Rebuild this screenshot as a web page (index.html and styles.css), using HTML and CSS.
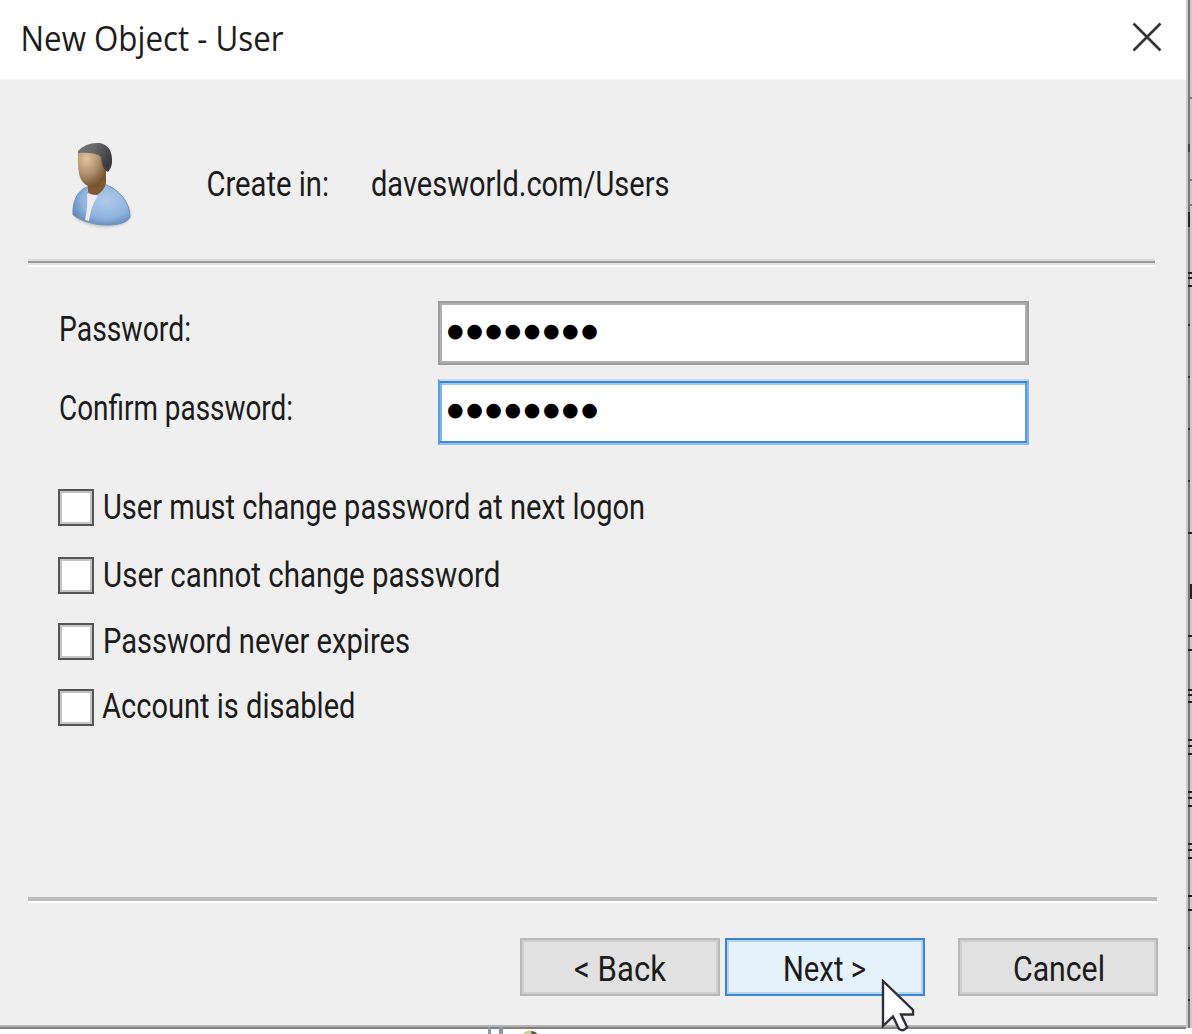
FILE: index.html
```html
<!DOCTYPE html>
<html lang="en">
<head>
<meta charset="utf-8">
<title>New Object - User</title>
<link rel="stylesheet" href="styles.css">
</head>
<body>
<div class="screen">
  <main class="dialog">
    <header class="titlebar">
      <svg class="text title" width="264" height="40"><text x="-1.5" y="31" textLength="263" lengthAdjust="spacingAndGlyphs">New Object - User</text></svg>
      <svg class="close" width="30" height="30" viewBox="0 0 30 30"><path d="M1.5 1.5 28.5 28.5M28.5 1.5 1.5 28.5"/></svg>
    </header>
    <section class="location">
      <svg class="avatar" width="70" height="92" viewBox="0 0 70 92">
        <defs>
          <radialGradient id="skin" cx=".3" cy=".25" r=".75"><stop offset="0" stop-color="#e2c3a0"/><stop offset=".55" stop-color="#b08f6c"/><stop offset="1" stop-color="#765331"/></radialGradient>
          <linearGradient id="hair" x1="0" x2="1" y1="0" y2=".4"><stop offset="0" stop-color="#777"/><stop offset=".5" stop-color="#666"/><stop offset="1" stop-color="#3c3c3c"/></linearGradient>
          <radialGradient id="shirt" cx=".58" cy=".4" r=".65"><stop offset="0" stop-color="#b0cbea"/><stop offset=".65" stop-color="#8fb4df"/><stop offset="1" stop-color="#6389b8"/></radialGradient>
          <filter id="soft" x="-20%" y="-20%" width="140%" height="140%"><feGaussianBlur stdDeviation="1.5"/></filter>
        </defs>
        <path d="M8 78Q28 92 54 86Q70 80 61 66Z" fill="#999" opacity=".6" filter="url(#soft)"/>
        <path d="M7 76C6 62 12 51 21 48L38 45C53 50 64 63 64 78C60 89 24 89 7 76Z" fill="url(#shirt)" stroke="#7195bd" stroke-width="1"/>
        <path d="M21 55Q26 53 32 57Q25 66 23 82L19 81Q22 67 21 55Z" fill="#eee9f5"/>
        <path d="M22 45 40 28 40 44Q38 52 31 56Q24 56 22 53Z" fill="#80592f"/>
        <path d="M12 13 36 10 41 29Q39 42 31 48Q22 50 16 42Q11 35 12 13Z" fill="url(#skin)"/>
        <path d="M12 12Q20 3 34 4Q47 7 46 24Q45 30 42 33Q36 31 35 18Q30 13 12 14Z" fill="url(#hair)"/>
      </svg>
      <svg class="text create" width="122" height="40"><text x="-1.5" y="31" textLength="122.5" lengthAdjust="spacingAndGlyphs">Create in:</text></svg>
      <svg class="text" width="300" height="40"><text x="-1" y="31" textLength="298.5" lengthAdjust="spacingAndGlyphs">davesworld.com/Users</text></svg>
    </section>
    <div class="rule rule-top"></div>
    <section class="fields">
      <div class="field">
        <svg class="text" width="378" height="40"><text x="-1" y="31" textLength="132" lengthAdjust="spacingAndGlyphs">Password:</text></svg>
        <div class="input"><span class="dots">●●●●●●●●</span></div>
      </div>
      <div class="field confirm">
        <svg class="text" width="378" height="40"><text x="-1" y="31" textLength="234" lengthAdjust="spacingAndGlyphs">Confirm password:</text></svg>
        <div class="input focused"><span class="dots">●●●●●●●●</span></div>
      </div>
    </section>
    <section class="options">
      <div class="option"><span class="box"></span><svg class="text" width="550" height="40"><text x="-2" y="31" textLength="542" lengthAdjust="spacingAndGlyphs">User must change password at next logon</text></svg></div>
      <div class="option"><span class="box"></span><svg class="text" width="550" height="40"><text x="-2" y="31" textLength="397.5" lengthAdjust="spacingAndGlyphs">User cannot change password</text></svg></div>
      <div class="option"><span class="box"></span><svg class="text" width="550" height="40"><text x="-2" y="31" textLength="307" lengthAdjust="spacingAndGlyphs">Password never expires</text></svg></div>
      <div class="option"><span class="box"></span><svg class="text" width="550" height="40"><text x="-3" y="31" textLength="253.5" lengthAdjust="spacingAndGlyphs">Account is disabled</text></svg></div>
    </section>
    <div class="rule rule-bottom"></div>
    <footer class="actions">
      <div class="button"><svg class="text" width="94" height="40"><text x="1" y="31" textLength="92" lengthAdjust="spacingAndGlyphs">&lt; Back</text></svg></div>
      <div class="button primary"><svg class="text" width="84" height="40"><text x="0" y="31" textLength="83" lengthAdjust="spacingAndGlyphs">Next &gt;</text></svg></div>
      <div class="button cancel"><svg class="text" width="93" height="40"><text x="1" y="31" textLength="92" lengthAdjust="spacingAndGlyphs">Cancel</text></svg></div>
    </footer>
  </main>
  <svg class="edge" width="6" height="1034" shape-rendering="crispEdges">
    <path fill="#cbcbcb" d="M0 0h6v1028H0z"/><path fill="#777" d="M2 0h2v1028H2z"/>
    <path stroke="#777" stroke-width="2" d="M2 98h4M2 180h4M2 205h4"/>
    <path stroke="#333" stroke-width="2" d="M2 325h2M2 377h2M2 429h2M2 481h2M2 948h2M2 1000h2"/>
    <path fill="#444" d="M2 144h2v8H2z"/><path fill="#222" d="M2 212h2v15H2zM4 584h2v15H4z"/>
    <path stroke="#222" stroke-width="2" d="M2 273h4M2 278h4M2 286h4M2 533h4M2 636h4M2 650h4M2 690h4M2 695h4M2 702h4M2 740h4M2 746h4M2 754h4M2 792h4M2 798h4M2 806h4M2 844h4M2 850h4M2 858h4M2 896h4M2 910h4"/>
  </svg>
  <svg class="sliver" width="60" height="9" viewBox="0 0 60 9"><path fill="#9298a2" d="M0 1h3v8H0zM11 1h4v8h-4z"/><path fill="#d6c98e" d="M34 9q5-6 10-4v4z"/><path fill="#555" d="M43 5q5 0 7 4h-6z"/></svg>
  <svg class="cursor" width="36" height="56" viewBox="0 0 36 56"><path d="M3 2V47L13 37.5L19 50Q24 53 27 48L21 35.5H33V31Z"/></svg>
</div>
</body>
</html>
```
FILE: styles.css
```css
* { box-sizing: border-box; }
body { margin: 0; background: #fff; font-family: Roboto, "Liberation Sans", sans-serif; }
.screen { position: relative; display: flex; width: 1192px; height: 1034px; overflow: hidden; }
.dialog { display: flex; flex-direction: column; width: 1186px; height: 1029px; background: #efefef; border-bottom: 2px solid #808080; box-shadow: inset 0 -2px #b4b4b4; }
.text { display: block; flex: none; overflow: visible; font-size: 35.5px; fill: #1c1c1c; }
.titlebar { display: flex; justify-content: space-between; height: 80px; flex: none; padding: 20px 24px 0 22px; background: #fff; border-bottom: 1px solid #f8f8f8; }
.title { font-family: "Open Sans", "Noto Sans", sans-serif; font-size: 35.5px; }
.close { margin-top: 2px; fill: none; stroke: #333; stroke-width: 2.6; }
.location { display: flex; align-items: flex-start; height: 179px; flex: none; padding: 85px 0 0 208px; }
.avatar { flex: none; margin: -26px 72px 0 -142px; }
.create { margin-right: 42px; }
.rule { flex: none; margin-left: 28px; }
.rule-top { width: 1127px; height: 8px; background: linear-gradient(#dcdcdc 2px, #999 2px 4px, #e3e3e3 4px 6px, #fbfbfb 6px); }
.rule-bottom { width: 1129px; height: 6px; background: linear-gradient(#bdbdbd 4px, #fff 4px); }
.fields { height: 222px; flex: none; padding: 34px 0 0 60px; }
.field { display: flex; align-items: flex-start; height: 78px; }
.field .text { margin-top: 9px; }
.confirm .text { margin-top: 10px; }
.input { width: 591px; height: 64px; padding-left: 7px; background: #fff; border: 2px solid #9d9d9d; box-shadow: inset 0 0 0 2px #b0b0b0; }
.focused { height: 66px; border-color: #c9daed #7fb2e9 #94bfe8 #5a9ce0; box-shadow: inset 0 2px #3a84d8, inset 0 -2px #3f88d9, inset 2px 0 #80b4ea, inset -2px 0 #5a9ce0, inset 0 4px #a3c8ef; }
.dots { display: block; font: 19px/53px "DejaVu Sans", sans-serif; letter-spacing: 2.6px; color: #000; }
.input .dots { padding-top: 1px; }
.focused .dots { padding-top: 2px; }
.options { height: 408px; flex: none; padding: 0 0 0 58px; }
.option { display: flex; align-items: flex-start; gap: 11px; height: 66px; }
.option:first-child { height: 68px; }
.option .text { margin-top: -1px; }
.option:last-child .text { margin-top: -2px; }
.box { width: 36px; height: 37px; flex: none; background: #fff; border: 2px solid #555; box-shadow: inset 0 0 0 2px #c4c4c4; }
.actions { display: flex; justify-content: flex-end; gap: 5px; padding: 35px 28px 0 0; }
.button { display: flex; justify-content: center; align-items: flex-start; width: 200px; height: 58px; padding-top: 10px; background: #e1e1e1; border: 2px solid #b8b8b8; box-shadow: inset 0 0 0 2px #cfcfcf; }
.primary { background: #e5f1fb; border-color: #3b85d8; box-shadow: inset 0 0 0 2px #b5d4f2; }
.cancel { margin-left: 28px; }
.edge { flex: none; }
.sliver { position: absolute; left: 488px; top: 1026px; }
.cursor { position: absolute; left: 880px; top: 979px; fill: #fff; stroke: #30303a; stroke-width: 2.4; }
```
